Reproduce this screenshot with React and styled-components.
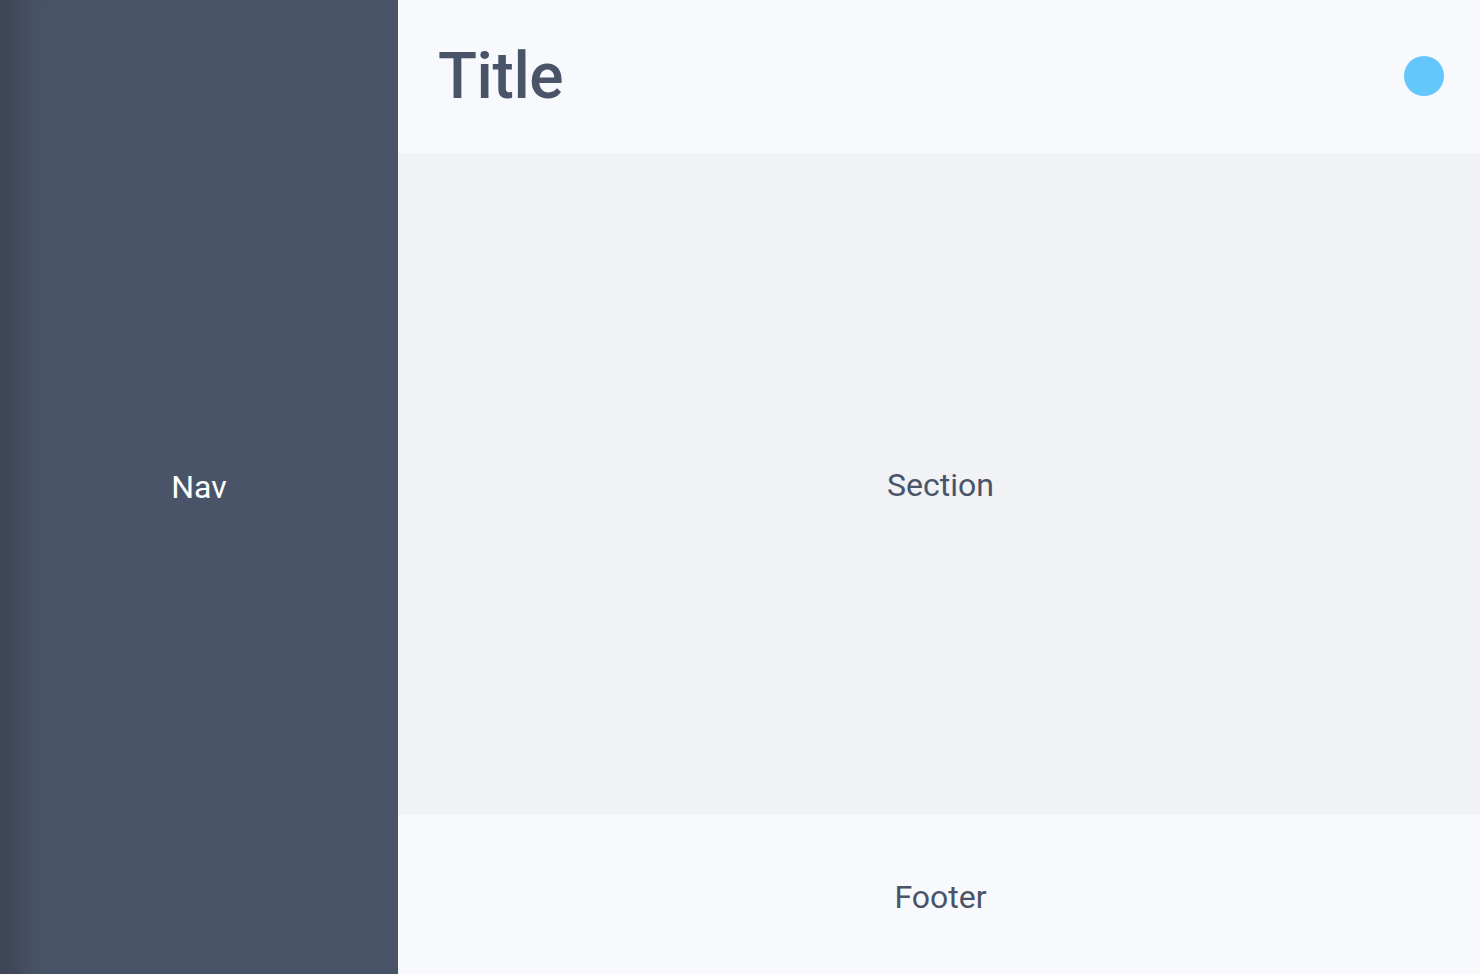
import React from 'react'
import styled, { createGlobalStyle } from 'styled-components'

const GlobalStyle = createGlobalStyle`
  html, body, #root {
    margin: 0;
    padding: 0;
    height: 100%;
  }
  body {
    font-family: Roboto, "Liberation Sans", sans-serif;
  }
`

const App = () => {
  return (
    <>
      <GlobalStyle />
      <Layout>
        <Nav>Nav</Nav>
        <Main>
          <Header>
            <Title>Title</Title>
            <Avatar />
          </Header>
          <Section>Section</Section>
          <Footer>Footer</Footer>
        </Main>
      </Layout>
    </>
  )
}

export default App

const Layout = styled.div`
  display: flex;
  height: 974px;
  width: 100%;
`

const Nav = styled.nav`
  width: 398px;
  flex-shrink: 0;
  background: #4a5468;
  box-shadow: inset 40px 0 30px -20px rgba(0, 0, 0, 0.18);
  color: #ffffff;
  font-size: 32px;
  display: flex;
  align-items: center;
  justify-content: center;
`

const Main = styled.div`
  flex: 1;
  display: flex;
  flex-direction: column;
`

const Header = styled.header`
  height: 153px;
  background: #f7f9fc;
  display: flex;
  align-items: center;
  justify-content: space-between;
  padding: 0 36px 0 40px;
`

const Title = styled.h1`
  margin: 0;
  font-size: 64px;
  font-weight: 500;
  color: #4a5468;
  letter-spacing: -0.4px;
`

const Avatar = styled.div`
  width: 40px;
  height: 40px;
  border-radius: 50%;
  background: #63c7fb;
  margin-top: -2px;
`

const Section = styled.section`
  flex: 1;
  background: #f0f2f6;
  color: #4a5468;
  font-size: 32px;
  display: flex;
  align-items: center;
  justify-content: center;
  padding-top: 2px;
  padding-left: 3px;
`

const Footer = styled.footer`
  height: 159px;
  box-sizing: border-box;
  background: #f7f9fc;
  color: #4a5468;
  font-size: 32px;
  display: flex;
  align-items: center;
  justify-content: center;
  padding-top: 4px;
  padding-left: 3px;
`
